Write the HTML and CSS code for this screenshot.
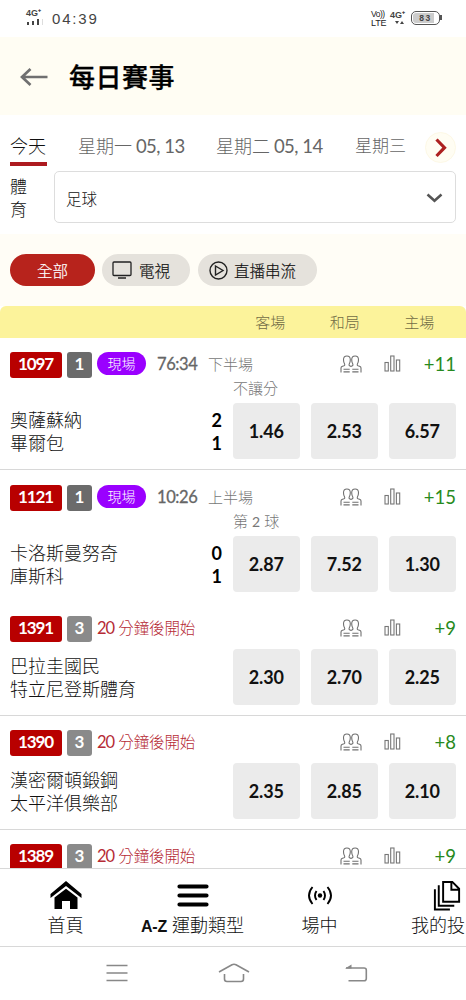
FILE: index.html
```html
<!DOCTYPE html>
<html lang="zh-Hant">
<head>
<meta charset="utf-8">
<title>每日賽事</title>
<link rel="stylesheet" href="styles.css">
</head>
<body>
<svg class="defs" width="0" height="0">
  <symbol id="people" viewBox="0 0 22 18"><g fill="none" stroke="#707070" stroke-width="1.1"><path d="M1 17.500V13Q1 11.600 2.500 11.200L4 10.800Q5 10.400 4.700 9.300Q3.500 7.500 3.500 4.800Q3.500 1 6.900 1Q10.300 1 10.300 4.800Q10.300 7.500 9.100 9.300Q8.800 10.500 9.900 10.900L11 11.300L12.100 10.900Q13.200 10.500 12.900 9.300Q11.700 7.500 11.700 4.800Q11.700 1 15.100 1Q18.500 1 18.500 4.800Q18.500 7.500 17.300 9.300Q17 10.400 18 10.800L19.500 11.200Q21 11.600 21 13V17.500"/><path d="M3.500 14.300H9.700M12.300 14.300H18.500M3.500 16.900H9.700M12.300 16.900H18.500"/></g></symbol>
  <symbol id="bars" viewBox="0 0 17 17"><g fill="none" stroke="#777" stroke-width="1.100"><rect x="1" y="7.500" width="3.300" height="8.500"/><rect x="6.700" y="1" width="3.300" height="15"/><rect x="12.400" y="5" width="3.300" height="11"/></g></symbol>
</svg>
<div class="phone">
  <div class="status">
    <div class="net"><span>4G⁺</span><svg width="18" height="7"><path d="M1 3h2v3h-2zM6 2h2v4h-2zM11 0h2v6h-2z" fill="#444"/><path d="M16 0h1v6h-1z" fill="#ddd"/></svg></div>
    <div class="clock">04:39</div>
    <div class="volte"><span>Vo))</span><span class="lte">LTE</span></div>
    <div class="data"><span>4G⁺</span><svg width="9" height="4"><path d="M0 0h4l-2 3zM5 3h4l-2 -3z" fill="#444"/></svg></div>
    <div class="battery"><span>83</span></div>
  </div>
  <header class="head">
    <svg width="28" height="20" viewBox="0 0 28 20"><path d="M27.500 10H2M10.500 2L2 10L10.500 18" fill="none" stroke="#707070" stroke-width="2.700"/></svg>
    <h1>每日賽事</h1>
  </header>
  <section class="filters">
    <div class="days">
      <div class="scroller">
        <div class="day active">今天</div><div class="day">星期一 <b>05, 13</b></div><div class="day">星期二 <b>05, 14</b></div><div class="day">星期三</div>
      </div>
      <div class="next"><svg width="12" height="20" viewBox="0 0 12 20"><path d="M1.500 1.500L9.500 9.700L1.500 18" fill="none" stroke="#ad2020" stroke-width="3.200"/></svg></div>
    </div>
    <div class="sport">
      <label>體育</label>
      <div class="select"><span>足球</span><svg width="17" height="10" viewBox="0 0 17 10"><path d="M1.500 1.500L8.500 7.800L15.500 1.500" fill="none" stroke="#555" stroke-width="2.500"/></svg></div>
    </div>
  </section>
  <div class="chips">
    <div class="chip all">全部</div>
    <div class="chip tv"><svg width="20" height="18" viewBox="0 0 20 18"><rect x="1" y="1" width="18" height="13.500" rx="1" fill="none" stroke="#222" stroke-width="1.300"/><path d="M6 17H14" stroke="#222" stroke-width="1.500"/></svg>電視</div>
    <div class="chip live"><svg width="19" height="19" viewBox="0 0 19 19"><g fill="none" stroke="#222" stroke-width="1.400"><circle cx="9.500" cy="9.500" r="8.500"/><path d="M6.500 5L14 9.500L6.500 14Z"/></g></svg>直播串流</div>
  </div>
  <div class="cols"><span>客場</span><span>和局</span><span>主場</span></div>
  <main class="games">
    <article class="game inplay lined">
      <div class="meta"><b class="no">1097</b><b class="cnt">1</b><span class="pill">現場</span><span class="time">76:34</span><span class="half">下半場</span><svg class="people"><use href="#people"/></svg><svg class="bars"><use href="#bars"/></svg><span class="more">+11</span></div>
      <div class="line">不讓分</div>
      <div class="body"><div class="teams"><p>奧薩蘇納<b>2</b></p><p>畢爾包<b>1</b></p></div><span class="odd">1.46</span><span class="odd">2.53</span><span class="odd">6.57</span></div>
    </article>
    <article class="game inplay">
      <div class="meta"><b class="no">1121</b><b class="cnt">1</b><span class="pill">現場</span><span class="time">10:26</span><span class="half">上半場</span><svg class="people"><use href="#people"/></svg><svg class="bars"><use href="#bars"/></svg><span class="more">+15</span></div>
      <div class="line">第 <i>2</i> 球</div>
      <div class="body"><div class="teams"><p>卡洛斯曼努奇<b>0</b></p><p>庫斯科<b>1</b></p></div><span class="odd">2.87</span><span class="odd">7.52</span><span class="odd">1.30</span></div>
    </article>
    <article class="game lined">
      <div class="meta"><b class="no">1391</b><b class="cnt soon">3</b><span class="starts"><i>20</i> 分鐘後開始</span><svg class="people"><use href="#people"/></svg><svg class="bars"><use href="#bars"/></svg><span class="more">+9</span></div>
      <div class="body"><div class="teams"><p>巴拉圭國民</p><p>特立尼登斯體育</p></div><span class="odd">2.30</span><span class="odd">2.70</span><span class="odd">2.25</span></div>
    </article>
    <article class="game lined">
      <div class="meta"><b class="no">1390</b><b class="cnt soon">3</b><span class="starts"><i>20</i> 分鐘後開始</span><svg class="people"><use href="#people"/></svg><svg class="bars"><use href="#bars"/></svg><span class="more">+8</span></div>
      <div class="body"><div class="teams"><p>漢密爾頓鍛鋼</p><p>太平洋俱樂部</p></div><span class="odd">2.35</span><span class="odd">2.85</span><span class="odd">2.10</span></div>
    </article>
    <article class="game">
      <div class="meta"><b class="no">1389</b><b class="cnt soon">3</b><span class="starts"><i>20</i> 分鐘後開始</span><svg class="people"><use href="#people"/></svg><svg class="bars"><use href="#bars"/></svg><span class="more">+9</span></div>
    </article>
  </main>
  <nav class="tabs">
    <div class="tab"><svg width="32" height="30" viewBox="0 0 32 30"><path d="M0.500 13.500L16 0.500L31.500 13.500V17.500L16 5.500L0.500 17.500Z"/><path d="M4.500 17L16 8.200L27.500 17V28.500H20V20.500H12V28.500H4.500Z"/></svg><span>首頁</span></div>
    <div class="tab"><svg width="32" height="30" viewBox="0 0 32 30"><path d="M2.500 6H29.500M2.500 15H29.500M2.500 24H29.500" stroke="#000" stroke-width="4.200" stroke-linecap="round"/></svg><span><b>A-Z</b> 運動類型</span></div>
    <div class="tab"><svg width="26" height="30" viewBox="0 0 26 30"><circle cx="13" cy="15" r="2.200"/><path d="M9.500 10.500Q6.500 15 9.500 19.500M16.500 10.500Q19.500 15 16.500 19.500M5.500 6.500Q-1.500 15 5.500 23.500M20.500 6.500Q27.500 15 20.500 23.500" fill="none" stroke="#000" stroke-width="1.900"/></svg><span>場中</span></div>
    <div class="tab last"><svg width="28" height="32" viewBox="0 0 28 32"><path d="M10 2H19.500L26.500 9V22.500H10ZM18.500 2V10H26.500M5.500 5.500V26.500H21.500M1.500 9.500V30.500H17" fill="none" stroke="#000" stroke-width="2"/></svg><span>我的投</span></div>
  </nav>
  <footer class="sys">
    <svg width="22" height="18" viewBox="0 0 22 18"><path d="M0.500 1.500H21.500M0.500 9H21.500M0.500 16.500H21.500"/></svg>
    <svg class="home" width="32" height="20" viewBox="0 0 32 20"><path d="M1 9L14 1.800Q16 0.800 18 1.800L31 9M6.500 11V16Q6.500 18.500 9 18.500H23Q25.500 18.500 25.500 16V11"/></svg>
    <svg width="24" height="18" viewBox="0 0 24 18"><path d="M2 4H20Q22.300 4 22.300 6V14.500Q22.300 16.800 20 16.800H4.500"/><path class="tip" d="M1 4.500L7.500 0.500V4.500Z"/></svg>
  </footer>
</div>
</body>
</html>
```
FILE: styles.css
```css
* { box-sizing: border-box; }
body, h1, p { margin: 0; }
body { background: #fff; font-family: Lato, "Noto Sans CJK TC", sans-serif; font-weight: 300; color: #111; }
svg { display: block; flex: none; }
i { font-style: normal; font-weight: 400; }
.defs { position: absolute; }
.phone { width: 466px; height: 1000px; overflow: hidden; display: flex; flex-direction: column; }
.phone > * { flex: none; }

.status { height: 37px; display: flex; align-items: flex-start; padding: 9px 26px 0; color: #444; font-family: "Liberation Sans", sans-serif; font-weight: 700; }
.net { width: 26px; font-size: 9px; line-height: 9px; }
.net svg { margin-top: 1px; }
.clock { font: 500 15px/19px "Liberation Sans", sans-serif; letter-spacing: 1.800px; }
.volte { margin-left: auto; width: 19px; display: flex; flex-direction: column; font-size: 8.500px; line-height: 9px; font-weight: 400; padding-top: 1px; white-space: nowrap; letter-spacing: -.5px; color: #222; }
.volte .lte { font-size: 9px; letter-spacing: -.2px; }
.data { width: 21px; font-size: 9px; line-height: 12px; }
.data svg { margin-left: 5px; }
.battery { position: relative; width: 29px; height: 14px; margin-top: 2px; border: 1.500px solid #555; border-radius: 5px; background: linear-gradient(90deg, #ccc 80%, #fff 80%); background-clip: content-box; padding: 1px; font-size: 8.500px; line-height: 10px; text-align: center; letter-spacing: 1.500px; }
.battery::after { content: ""; position: absolute; left: 28px; top: 3px; width: 2px; height: 5px; background: #555; }

.head { height: 78px; background: #fffdf3; display: flex; align-items: center; padding: 1px 20px 0; gap: 21px; }
.head h1 { font-size: 26px; line-height: 36px; font-weight: 500; color: #000; letter-spacing: .5px; -webkit-text-stroke: .3px #000; }

.filters { height: 119px; padding: 17px 10px 0; }
.days { height: 34px; display: flex; justify-content: space-between; }
.scroller { width: 396px; display: flex; gap: 31px; overflow: hidden; font-size: 18px; line-height: 28px; color: #666; white-space: nowrap; }
.day { flex: none; height: 34px; width: 107px; }
.day:last-child { width: auto; margin-left: 1px; font-size: 17px; }
.day b { font-weight: 400; font-size: 18.500px; margin-left: -1px; letter-spacing: -.5px; }
.day.active { color: #111; width: 37px; border-bottom: 4px solid #ad1a20; }
.next { width: 31px; height: 31px; border-radius: 50%; background: #fffdf3; border: 1px solid #fdf8e6; display: grid; place-items: center; }
.sport { display: flex; margin-top: 5px; }
.sport label { width: 44px; padding-right: 23px; font-size: 17px; line-height: 23px; padding-top: 4px; word-break: break-all; }
.select { flex: 1; height: 52px; border: 1px solid #ddd; border-radius: 5px; display: flex; align-items: center; justify-content: space-between; padding: 1px 12px 0 11px; font-size: 15.500px; }

.chips { height: 72px; background: #fffdf6; display: flex; gap: 8px; padding: 20px 10px 0; }
.chip { height: 32px; border-radius: 16px; background: #e5e2dc; font-size: 15.500px; display: flex; align-items: center; gap: 7px; -webkit-text-stroke: .2px currentColor; }
.chip.all { width: 85px; justify-content: center; background: #b7231c; color: #fff; }
.chip.tv { width: 88px; padding-left: 10px; margin-left: -1px; }
.chip.live { width: 119px; padding-left: 11px; gap: 6px; }
.cols { height: 32px; background: #fcf39b; border-radius: 6px 6px 0 0; padding-left: 233px; display: flex; color: #716c45; font-size: 15px; line-height: 32px; text-align: center; }
.cols span { width: 74.500px; }

.games { height: 531px; overflow: hidden; margin-top: -1px; }
.game { height: 114px; padding: 14px 10px 0; }
.game.inplay { height: 132px; padding-top: 15px; }
.game.lined { border-bottom: 1px solid #d8d8d8; }
.game.inplay.lined { height: 133px; }
.meta { height: 26px; display: flex; align-items: flex-start; line-height: 24px; }
.no, .cnt { height: 26px; line-height: 24px; text-align: center; color: #fff; font-weight: 700; font-size: 17px; border-radius: 3px; background: #b80000; }
.no { width: 52px; letter-spacing: -1.100px; padding-right: 1px; }
.cnt { width: 25px; margin: 0 5px; background: #6b6b6b; }
.cnt.soon { background: #8a8a8a; }
.pill { width: 49px; height: 23px; border-radius: 12px; background: #9a00ff; color: #fff; text-align: center; font-size: 14px; line-height: 23px; }
.time { width: 51px; padding-left: 11px; font-size: 16.500px; font-weight: 400; color: #666; letter-spacing: -.4px; -webkit-text-stroke: .3px #666; }
.half { margin-left: 11px; font-size: 15px; color: #777; }
.people { width: 22px; height: 18px; margin: 3px 0 0 auto; }
.bars { width: 17px; height: 17px; margin: 3px 0 0 22px; }
.more { width: 55px; text-align: right; font-size: 18.500px; font-weight: 400; color: #278a20; }
.starts { color: #b62b35; font-size: 15.500px; white-space: nowrap; letter-spacing: -.1px; }
.starts i { font-size: 16.500px; letter-spacing: -1px; }
.line { height: 19px; line-height: 20px; font-size: 15px; color: #777; padding-left: 223px; white-space: nowrap; }
.line i { font-size: 14px; }
.body { display: flex; gap: 10.500px; margin-top: 7px; }
.inplay .body { margin-top: 6px; }
.teams { flex: 1; padding-top: 6px; font-size: 18px; line-height: 23px; }
.teams p { display: flex; justify-content: space-between; height: 23px; white-space: nowrap; }
.teams b { font-size: 18px; font-weight: 700; color: #000; line-height: 22px; }
.odd { width: 67.500px; height: 56px; border-radius: 4px; background: #ebebeb; text-align: center; line-height: 56px; font-size: 18px; font-weight: 700; color: #111; letter-spacing: -.1px; }

.tabs { height: 79px; border-top: 1px solid #d8d8d8; border-bottom: 1px solid #d8d8d8; background: #fff; display: flex; padding-left: 2px; padding-top: 11px; }
.tab { flex: none; width: 127px; height: 60px; display: flex; flex-direction: column; align-items: center; font-size: 18px; line-height: 28px; white-space: nowrap; }
.tab svg { height: 31px; }
.tab.last { width: 83px; padding-left: 28px; align-items: flex-start; }
.tab.last svg { margin-left: 22px; }
.tab b { font-family: "Liberation Sans", sans-serif; font-weight: 700; font-size: 16px; letter-spacing: -.2px; }
.sys { height: 53px; padding: 0 98px 2px 106px; display: flex; align-items: center; justify-content: space-between; }
.sys svg { fill: none; stroke: #888; stroke-width: 1.600; }
.sys .home { margin-left: -5px; }
.sys .tip { fill: #888; stroke: none; }
```
